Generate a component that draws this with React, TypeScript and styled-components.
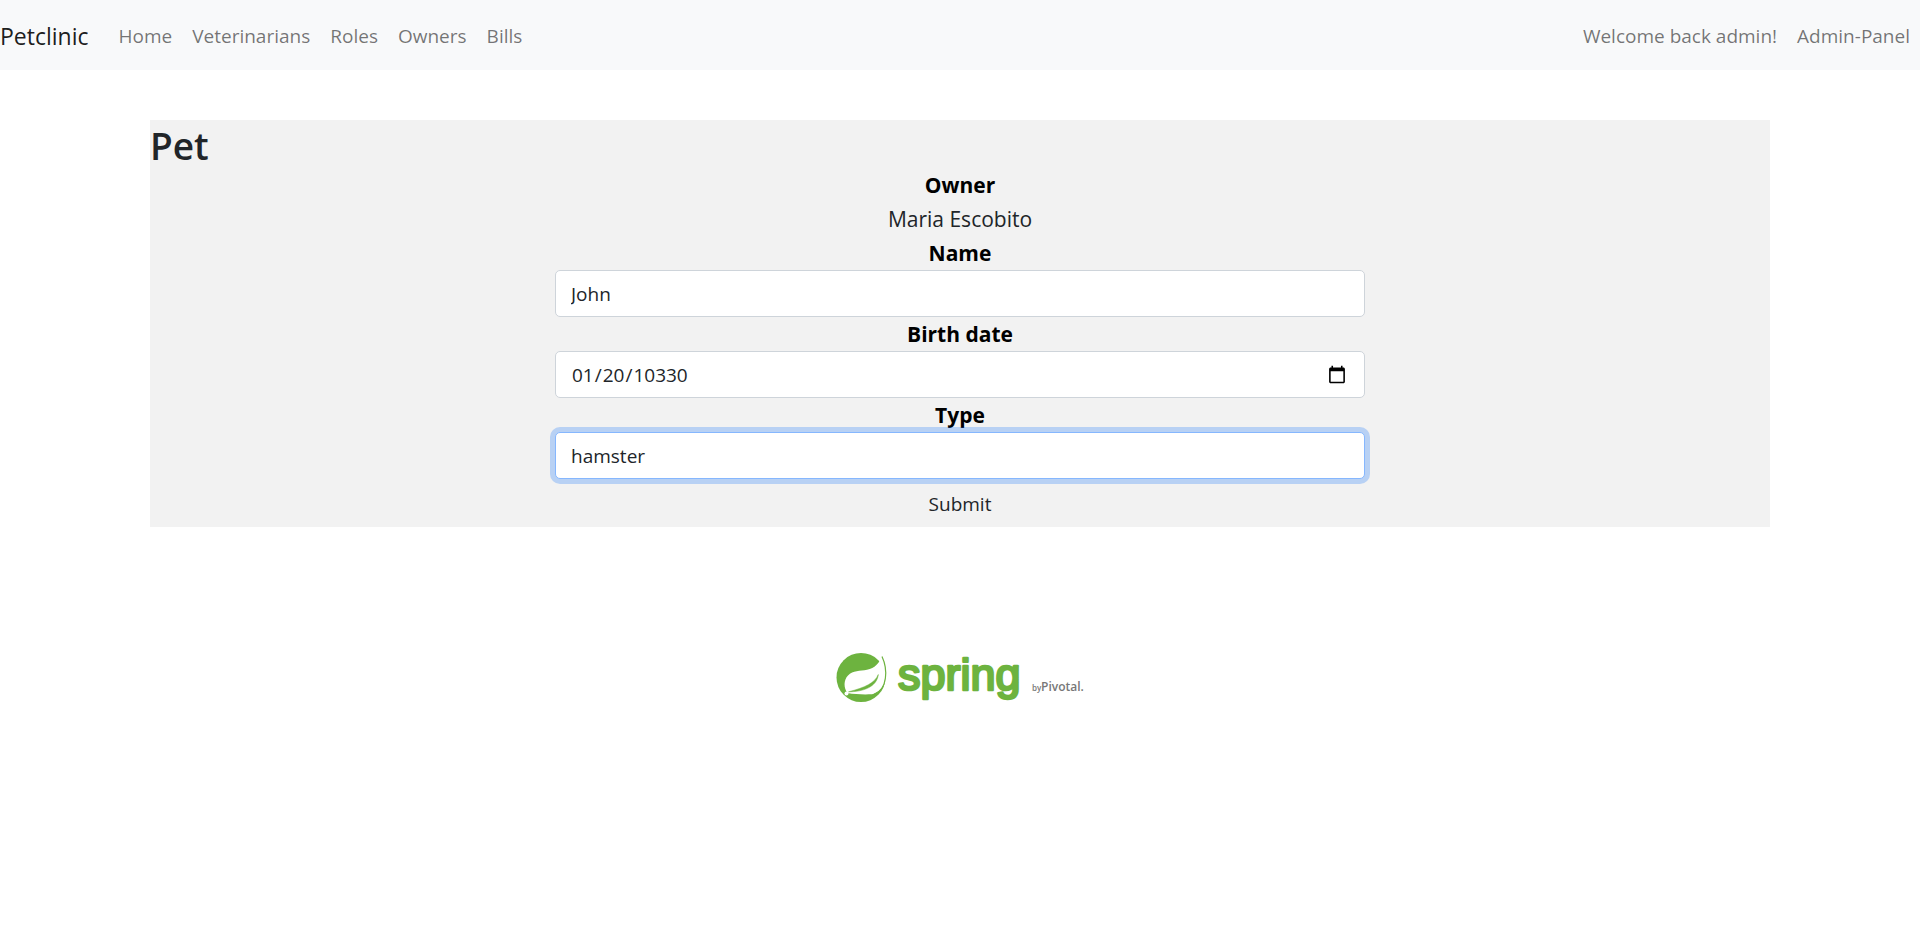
import React from "react";
import styled, { createGlobalStyle } from "styled-components";

const GlobalStyle = createGlobalStyle`
  *, *::before, *::after { box-sizing: border-box; }
  body {
    margin: 0;
    background: #fff;
    color: #212529;
    font-family: "Open Sans", "Noto Sans", sans-serif;
    font-size: 19px;
    line-height: 30px;
  }
`;

const Navbar = styled.nav`
  display: flex;
  align-items: center;
  min-height: 70px;
  padding: 10px 0;
  background: #f8f9fa;
`;

const Brand = styled.a`
  margin-right: 20px;
  padding-top: 2px;
  font-size: 23px;
  line-height: 38px;
  color: rgba(0, 0, 0, 0.9);
  text-decoration: none;
`;

const NavList = styled.ul<{ $end?: boolean }>`
  display: flex;
  margin: 0;
  margin-left: ${(p) => (p.$end ? "auto" : "0")};
  padding: 0;
  list-style: none;
`;

const NavLink = styled.a`
  display: block;
  padding: 11px 10px 9px;
  color: rgba(0, 0, 0, 0.55);
  text-decoration: none;
`;

const Panel = styled.main`
  margin: 50px 150px 0;
  background: #f2f2f2;
`;

const Title = styled.h1`
  margin: 0;
  padding-top: 4px;
  font-size: 37px;
  font-weight: 600;
  line-height: 44px;
`;

const Form = styled.form`
  display: flex;
  flex-direction: column;
  align-items: center;
  font-size: 21px;
  line-height: 34px;
`;

const Label = styled.label`
  color: #000;
  font-weight: 700;
`;

const Output = styled.output``;

const Input = styled.input`
  appearance: none;
  width: 50%;
  height: 47px;
  margin: 0;
  padding: 7px 15px;
  border: 1px solid #ced4da;
  border-radius: 5px;
  background: #fff;
  color: #212529;
  font: inherit;
  font-size: 19px;
  line-height: 30px;

  &:focus {
    border-color: #86b7fe;
    outline: 0;
    box-shadow: 0 0 0 5px rgba(13, 110, 253, 0.25);
  }

  &::-webkit-calendar-picker-indicator {
    width: 20px;
    height: 20px;
  }
`;

const SubmitButton = styled.button`
  padding: 9px 16px 7px;
  border: 1px solid transparent;
  background: transparent;
  color: #212529;
  font: inherit;
  font-size: 19px;
  line-height: 30px;
`;

const Footer = styled.footer`
  display: flex;
  justify-content: center;
  padding-top: 125px;
`;

const LogoDrawing = styled.svg`
  overflow: visible;
`;

const SpringLogo = () => (
  <LogoDrawing width="248" height="56" viewBox="0 0 248 56" role="img" aria-label="Spring by Pivotal">
    <circle cx="25" cy="25.5" r="24.5" fill="#6db33f" />
    <path
      d="M46 4.500 C43 11 39 16.500 31 17.800 C24 19 17 18.500 12 23.500 C7.500 28 7.500 36 11.500 41 C19 42.500 28 42.500 36 42.300 C44 41 49.500 33 49.500 24 C49.500 16 48.500 10 46 4.500 Z"
      fill="#fff"
    />
    <path d="M46 4.500 C49 11 50.300 19 49.400 26 C48.400 34 44 40 38 42.300" fill="none" stroke="#6db33f" strokeWidth="1.2" />
    <path d="M42.300 22.500 C39 31 29 35.500 12.500 39.800 C27 39.800 41 35 42.300 22.500 Z" fill="#6db33f" stroke="#6db33f" strokeWidth="0.5" />
    <circle cx="10.500" cy="41.500" r="2" fill="#fff" />
    <text
      x="62"
      y="38"
      fontFamily="Liberation Sans, sans-serif"
      fontSize="45"
      fill="#6db33f"
      stroke="#6db33f"
      strokeWidth="2.6"
      strokeLinejoin="round"
    >
      spring
    </text>
    <text x="196" y="39" fontFamily="Open Sans, sans-serif" fontWeight="600" fontSize="8" fill="#777">by</text>
    <text x="205" y="39" fontFamily="Open Sans, sans-serif" fontWeight="600" fontSize="12" fill="#777">Pivotal.</text>
  </LogoDrawing>
);

const links = ["Home", "Veterinarians", "Roles", "Owners", "Bills"];
const accountLinks = ["Welcome back admin!", "Admin-Panel"];

export default function App() {
  return (
    <>
      <GlobalStyle />
      <Navbar>
        <Brand href="#">Petclinic</Brand>
        <NavList>
          {links.map((l) => (
            <li key={l}><NavLink href="#">{l}</NavLink></li>
          ))}
        </NavList>
        <NavList $end>
          {accountLinks.map((l) => (
            <li key={l}><NavLink href="#">{l}</NavLink></li>
          ))}
        </NavList>
      </Navbar>
      <Panel>
        <Title>Pet</Title>
        <Form onSubmit={(e) => e.preventDefault()}>
          <Label htmlFor="owner">Owner</Label>
          <Output id="owner">Maria Escobito</Output>
          <Label htmlFor="name">Name</Label>
          <Input id="name" defaultValue="John" />
          <Label htmlFor="birthDate">Birth date</Label>
          <Input id="birthDate" type="date" defaultValue="10330-01-20" />
          <Label htmlFor="type">Type</Label>
          <Input as="select" id="type" defaultValue="hamster" autoFocus>
            <option>hamster</option>
          </Input>
          <SubmitButton type="submit">Submit</SubmitButton>
        </Form>
      </Panel>
      <Footer><SpringLogo /></Footer>
    </>
  );
}
